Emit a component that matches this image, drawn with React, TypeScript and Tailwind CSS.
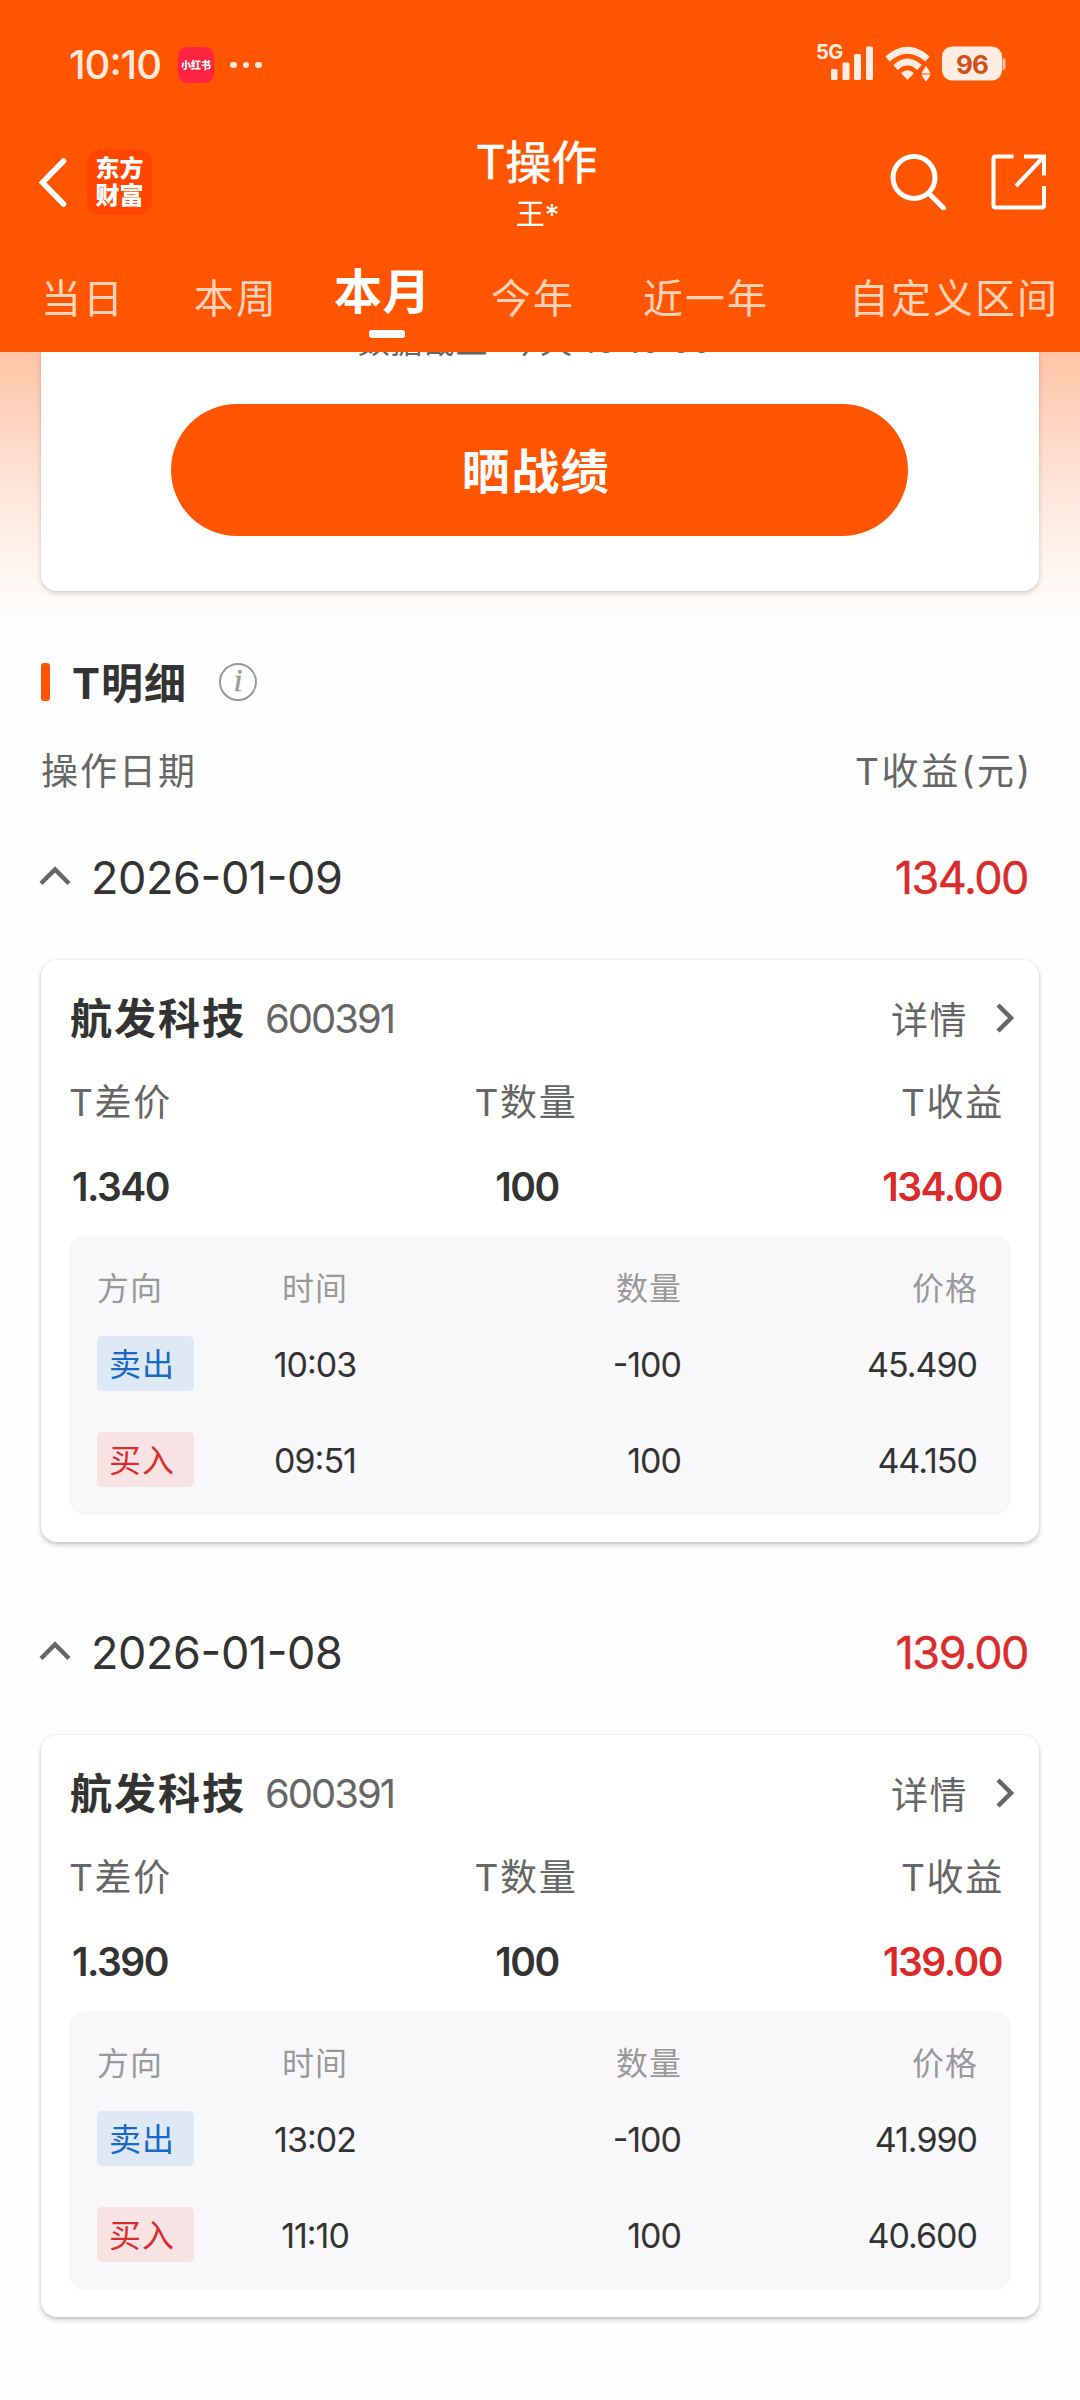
type Side = 'sell' | 'buy';

interface Trade {
  side: Side;
  time: string;
  amount: string;
  price: string;
}

interface DayRecord {
  date: string;
  profit: string;
  name: string;
  code: string;
  diff: string;
  count: string;
  trades: Trade[];
}

const tabs = [
  { label: '当日', width: 'w-[153px]' },
  { label: '本周', width: 'w-[140px]' },
  { label: '本月', width: 'w-[157px]', active: true },
  { label: '今年', width: 'w-[152px]' },
  { label: '近一年', width: 'w-[206px]' },
  { label: '自定义区间', width: 'w-[220px]' },
];

const records: DayRecord[] = [
  {
    date: '2026-01-09',
    profit: '134.00',
    name: '航发科技',
    code: '600391',
    diff: '1.340',
    count: '100',
    trades: [
      { side: 'sell', time: '10:03', amount: '-100', price: '45.490' },
      { side: 'buy', time: '09:51', amount: '100', price: '44.150' },
    ],
  },
  {
    date: '2026-01-08',
    profit: '139.00',
    name: '航发科技',
    code: '600391',
    diff: '1.390',
    count: '100',
    trades: [
      { side: 'sell', time: '13:02', amount: '-100', price: '41.990' },
      { side: 'buy', time: '11:10', amount: '100', price: '40.600' },
    ],
  },
];

function StatusBar() {
  return (
    <div className="flex h-[130px] items-center justify-between pl-[69px] pr-[73px]">
      <div className="flex items-center">
        <span className="w-[109px] text-[40px] font-medium leading-[60px] tracking-[-1px] text-[#ffe9dc]">10:10</span>
        <span className="flex h-9 w-9 items-center justify-center rounded-[9px] bg-[#ff2442] text-[10px] font-black leading-none text-white">
          小红书
        </span>
        <span className="ml-4 flex gap-[6px]">
          <i className="size-[6.5px] rounded-full bg-[#ffe9dc]" />
          <i className="size-[6.5px] rounded-full bg-[#ffe9dc]" />
          <i className="size-[6.5px] rounded-full bg-[#ffe9dc]" />
        </span>
      </div>
      <svg width="192" height="50" viewBox="0 0 192 50" fill="#ffede4">
        <text x="1" y="19" fontSize="20" fontWeight="700" letterSpacing="-0.5">5G</text>
        <rect x="16" y="29" width="6.5" height="11" rx="1.5" />
        <rect x="27.500" y="22.500" width="7" height="17.500" rx="1.5" />
        <rect x="39" y="14" width="7" height="26" rx="1.5" />
        <rect x="51" y="6.500" width="7" height="33.500" rx="1.5" />
        <g fill="none" stroke="#ffede4" strokeWidth="6.5">
          <path d="M72.500 19Q92.500 1.500 112.500 19" />
          <path d="M80.500 27.500Q92.500 16.500 104.500 27.500" />
        </g>
        <path d="M86 33Q92.500 27.500 99 33L92.500 40Z" />
        <path d="M111 26.500L115 33H107ZM107 35H115L111 41Z" strokeWidth="1" stroke="#ffede4" strokeLinejoin="round" />
        <rect x="127" y="6.500" width="60" height="34" rx="10" />
        <path d="M187.500 18Q190.500 18 190.500 21V27Q190.500 30 187.500 30Z" fillOpacity="0.7" />
        <text x="157" y="33.500" fontSize="26" fontWeight="700" textAnchor="middle" letterSpacing="-1" fill="#cf5116">96</text>
      </svg>
    </div>
  );
}

function NavBar() {
  return (
    <div className="grid h-[110px] grid-cols-[1fr_auto_1fr] text-white">
      <div className="flex h-[103px] items-center pl-[38px]">
        <svg width="30" height="52" viewBox="0 0 30 52" fill="none" stroke="currentColor" strokeWidth="5.5" strokeLinecap="round">
          <path d="M25.500 5L4.500 26.500L25.500 48" />
        </svg>
        <div className="ml-[19px] flex h-[66px] w-[65px] flex-col items-center justify-center rounded-[14px] bg-[#ff4500] text-[24px] font-black leading-[27px]">
          <span>东方</span>
          <span>财富</span>
        </div>
      </div>
      <div className="flex flex-col items-center pr-[7px] pt-[2px]">
        <h1 className="text-[46px] leading-[60px] [-webkit-text-stroke:0.6px]">T操作</h1>
        <p className="pl-0.5 text-[29px] leading-[46px] [font-feature-settings:normal]">王*</p>
      </div>
      <div className="flex h-[103px] items-center justify-end gap-[44px] pr-[33px]">
        <svg width="58" height="56" viewBox="0 0 58 56" fill="none" stroke="currentColor" strokeWidth="5" strokeLinecap="round">
          <circle cx="25" cy="23.500" r="21" />
          <path d="M40 39.500L54.500 54" />
        </svg>
        <svg width="56" height="56" viewBox="0 0 56 56" fill="none" stroke="currentColor" strokeWidth="4">
          <path d="M22.500 2.500H4.500Q2.500 2.500 2.500 4.500V51.500Q2.500 53.500 4.500 53.500H51Q53 53.500 53 51.500V32" />
          <path d="M33 2.500H53V21.500M52 3.500L25 32" />
        </svg>
      </div>
    </div>
  );
}

function Tabs() {
  return (
    <div className="flex h-[112px] pl-[41px]">
      {tabs.map((tab) =>
        tab.active ? (
          <div key={tab.label} className={`${tab.width} shrink-0 pt-[22px]`}>
            <div className="text-[48px] font-bold leading-[60px] tracking-[0.5px] text-white">{tab.label}</div>
            <div className="ml-[35px] mt-2 h-2 w-9 rounded-[3px] bg-white" />
          </div>
        ) : (
          <div
            key={tab.label}
            className={`${tab.width} shrink-0 whitespace-nowrap pt-[29px] text-[40px] leading-[60px] tracking-[2px] text-[#ffd3bb]`}
          >
            {tab.label}
          </div>
        ),
      )}
    </div>
  );
}

function TradeRow({ trade }: { trade: Trade }) {
  const tag = trade.side === 'sell' ? 'bg-[#dfe9f5] text-[#1769c4]' : 'bg-[#f8e3e4] text-[#d92d2d]';
  return (
    <div className="grid h-[55px] grid-cols-[118px_200px_266px_296px] items-center text-[34px] tracking-[-1px]">
      <span className={`${tag} h-[55px] w-[97px] rounded-[5px] pl-3 text-[32px] leading-[57px] tracking-[1px]`}>
        {trade.side === 'sell' ? '卖出' : '买入'}
      </span>
      <span className="pt-px text-center">{trade.time}</span>
      <span className="pt-px text-right">{trade.amount}</span>
      <span className="pt-px text-right">{trade.price}</span>
    </div>
  );
}

function DaySection({ record }: { record: DayRecord }) {
  return (
    <section className="mb-[81px]">
      <div className="flex h-[60px] items-center pl-[39px] pr-[52px] text-[45px] leading-[60px]">
        <svg width="32" height="20" viewBox="0 0 32 20" fill="none" stroke="#666" strokeWidth="4.5" className="-mt-1">
          <path d="M2 17.500L16 3.500L30 17.500" />
        </svg>
        <span className="ml-5 tracking-[-0.4px]">{record.date}</span>
        <span className="ml-auto tracking-[-1.5px] text-[#d92d2d] [-webkit-text-stroke:0.4px]">{record.profit}</span>
      </div>

      <div className="mx-[41px] mt-[52px] h-[582px] rounded-2xl bg-white px-7 pt-[29px] shadow-[0_3px_5px_rgba(0,0,0,0.2),0_0_3px_rgba(0,0,0,0.1)]">
        <div className="flex h-[60px] items-center">
          <span className="pl-px text-[42px] font-bold leading-[60px] tracking-[2px]">{record.name}</span>
          <span className="ml-[19px] text-[40px] tracking-[-2px] text-[#666]">{record.code}</span>
          <span className="ml-auto pt-[3px] text-[37px] tracking-[1.5px] text-[#666]">详情</span>
          <svg width="20" height="30" viewBox="0 0 20 30" fill="none" stroke="#666" strokeWidth="4.5" className="-mt-0.5 ml-[27px] mr-[-4px]">
            <path d="M3 2L16 15L3 28" />
          </svg>
        </div>
        <div className="mt-[29px] grid h-[50px] grid-cols-[310px_294px_331px] text-[37px] leading-[50px] tracking-[1.7px] text-[#666]">
          <span>T差价</span>
          <span className="text-center">T数量</span>
          <span className="text-right">T收益</span>
        </div>
        <div className="mt-[34px] grid h-[50px] grid-cols-[310px_296px_327px] text-[39px] font-semibold leading-[50px] tracking-[-1.5px]">
          <span className="pl-[3px]">{record.diff}</span>
          <span className="text-center">{record.count}</span>
          <span className="text-right text-[#dc2a2a]">{record.profit}</span>
        </div>

        <div className="mt-6 h-[279px] rounded-2xl bg-[#f8f8fa] pl-7 pt-[33px]">
          <div className="grid h-10 grid-cols-[118px_200px_267px_296px] text-[32px] leading-10 tracking-[1px] text-[#999]">
            <span>方向</span>
            <span className="text-center">时间</span>
            <span className="text-right">数量</span>
            <span className="text-right">价格</span>
          </div>
          <div className="mt-[27px] flex flex-col gap-[41px]">
            {record.trades.map((t) => (
              <TradeRow key={t.side} trade={t} />
            ))}
          </div>
        </div>
      </div>
    </section>
  );
}

export default function App() {
  return (
    <div className="h-[2400px] w-[1080px] overflow-hidden bg-[#fefefe] font-['Inter','Noto_Sans_CJK_SC',sans-serif] text-[#333] [font-feature-settings:'case']">
      <header className="bg-[#ff5500]">
        <StatusBar />
        <NavBar />
        <Tabs />
      </header>

      {/* the summary card is scrolled halfway under the header */}
      <div className="h-[300px] overflow-hidden bg-[linear-gradient(to_bottom,#ffc4a6_0px,#ffe5d9_135px,#fff5ef_215px,#fefefe_268px)]">
        <div className="mx-[41px] h-[239px] rounded-b-2xl bg-white pr-0.5 shadow-[0_2px_5px_rgba(0,0,0,0.2)]">
          <div className="-translate-y-[30px]">
            <p className="h-10 pr-2 text-center text-[32px] leading-10 tracking-[0.6px] text-[#666]">数据截止: 今天 10:10:00</p>
            <button className="mx-auto mt-[42px] block h-[132px] w-[737px] rounded-full bg-[#ff5500] pr-1.5 text-[48px] font-bold leading-[135px] tracking-[1.5px] text-white">
              晒战绩
            </button>
          </div>
        </div>
      </div>

      <div className="flex h-[60px] items-center pl-[41px]">
        <span className="h-[38px] w-[9px] rounded-[3px] bg-[#ff5500]" />
        <h2 className="ml-[22px] pt-[3px] text-[42px] font-bold leading-[60px] tracking-[1px]">T明细</h2>
        <span className="ml-[32px] flex h-[38px] w-[38px] items-center justify-center rounded-full border-[2.5px] border-[#999] pb-[3px] font-['Liberation_Serif',serif] text-[31px] italic leading-none text-[#999] [-webkit-text-stroke:0.5px]">
          i
        </span>
      </div>
      <div className="mb-[51px] mt-[35px] flex h-[50px] justify-between pl-[41px] pr-[47px] text-[37px] leading-[50px] text-[#666]">
        <span className="tracking-[2px]">操作日期</span>
        <span className="tracking-[2.7px]">T收益(元)</span>
      </div>

      {records.map((r) => (
        <DaySection key={r.date} record={r} />
      ))}
    </div>
  );
}
